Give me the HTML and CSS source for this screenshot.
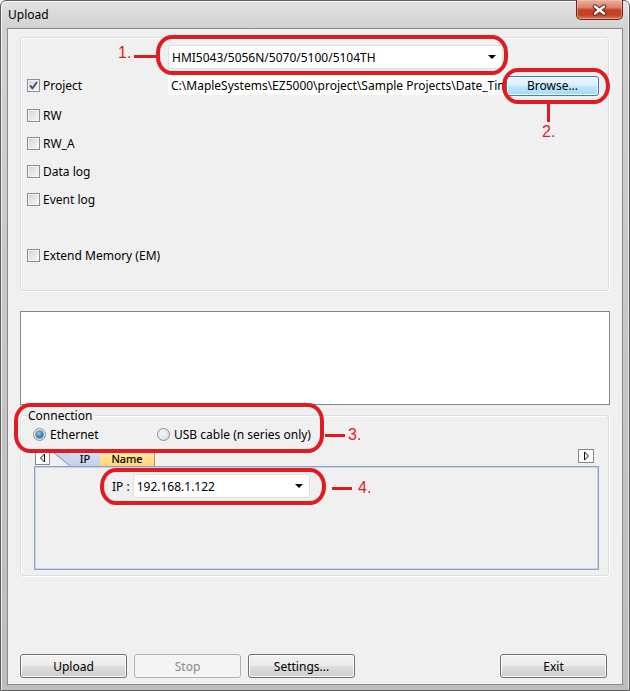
FILE: index.html
```html
<!DOCTYPE html>
<html lang="en">
<head>
<meta charset="utf-8">
<title>Upload</title>
<link rel="stylesheet" href="styles.css">
</head>
<body>
<div class="window">
  <div class="titlebar">
    <span class="title">Upload</span>
    <div class="close">
      <svg width="15" height="12" viewBox="0 0 15 12"><path d="M3 2.5 L12 9.5 M12 2.5 L3 9.5" stroke="#5a2418" stroke-width="4.4" stroke-linecap="round"/><path d="M3 2.5 L12 9.5 M12 2.5 L3 9.5" stroke="#ffffff" stroke-width="2.4" stroke-linecap="round"/></svg>
    </div>
  </div>
  <div class="client">
    <div class="group group-top">
      <div class="row-combo">
        <div class="combo combo-model"><span class="combo-text">HMI5043/5056N/5070/5100/5104TH</span><span class="drop"></span></div>
      </div>
      <div class="row-project">
        <div class="chk-item chk-first"><span class="chk"><svg width="11" height="11" viewBox="0 0 11 11"><path d="M2 5.5 L4.5 8.3 L9 2" fill="none" stroke="#3d4f8c" stroke-width="1.9"/></svg></span><span>Project</span></div>
        <div class="path">C:\MapleSystems\EZ5000\project\Sample Projects\Date_Time</div>
        <button class="btn btn-hot">Browse...</button>
      </div>
      <div class="chk-list">
        <div class="chk-item"><span class="chk"></span><span>RW</span></div>
        <div class="chk-item"><span class="chk"></span><span>RW_A</span></div>
        <div class="chk-item"><span class="chk"></span><span>Data log</span></div>
        <div class="chk-item"><span class="chk"></span><span>Event log</span></div>
        <div class="chk-spacer"></div>
        <div class="chk-item"><span class="chk"></span><span>Extend Memory (EM)</span></div>
      </div>
    </div>
    <div class="listbox"></div>
    <div class="group group-conn">
      <div class="legend">Connection</div>
      <div class="radios">
        <div class="radio-item radio-first"><span class="radio on"><span class="dot"></span></span><span>Ethernet</span></div>
        <div class="radio-item"><span class="radio"></span><span>USB cable (n series only)</span></div>
      </div>
      <div class="tabs">
        <div class="tabstrip">
          <div class="tab-arrow"><svg width="7" height="10" viewBox="0 0 7 10"><path d="M5.5 1 L1.5 5 L5.5 9 Z" fill="#fff" stroke="#000" stroke-width="1"/></svg></div>
          <div class="tab-ip"><span class="tab-slant"></span><span class="tab-body">IP</span></div>
          <div class="tab-name">Name</div>
          <div class="tab-arrow tab-arrow-right"><svg width="7" height="10" viewBox="0 0 7 10"><path d="M1.5 1 L5.5 5 L1.5 9 Z" fill="#fff" stroke="#000" stroke-width="1"/></svg></div>
        </div>
        <div class="tabpanel">
          <div class="ip-row">
            <span class="ip-label">IP :</span>
            <div class="combo combo-ip"><span class="combo-text">192.168.1.122</span><span class="drop"></span></div>
          </div>
        </div>
      </div>
    </div>
    <div class="buttons">
      <button class="btn">Upload</button>
      <button class="btn btn-disabled">Stop</button>
      <button class="btn">Settings...</button>
      <button class="btn btn-exit">Exit</button>
    </div>
  </div>
</div>

<div class="mark ring ring1"></div>
<div class="mark hline line1"></div>
<div class="mark num num1">1.</div>

<div class="mark ring ring2"></div>
<div class="mark vline line2"></div>
<div class="mark num num2">2.</div>

<div class="mark ring ring3"></div>
<div class="mark hline line3"></div>
<div class="mark num num3">3.</div>

<div class="mark ring ring4"></div>
<div class="mark hline line4"></div>
<div class="mark num num4">4.</div>
</body>
</html>
```

FILE: styles.css
```css
* { box-sizing: border-box; }
html, body { margin: 0; padding: 0; }
body {
  position: relative;
  width: 630px;
  height: 691px;
  overflow: hidden;
  font-family: "Noto Sans", "Liberation Sans", sans-serif;
  font-size: 12px;
  color: #000;
  background: #fff;
}

.window {
  width: 630px;
  height: 691px;
  display: flex;
  flex-direction: column;
  border: 1px solid #5e5e5e;
  border-radius: 6px 6px 0 0;
  background: linear-gradient(#e2e2e2 0, #d2d2d2 27px, #c8c8c8 40%, #bdbdbd 100%);
  box-shadow: inset 1px 1px 0 rgba(255,255,255,0.7), inset -1px 0 0 rgba(255,255,255,0.5);
}

.titlebar {
  height: 27px;
  display: flex;
  align-items: flex-start;
  flex-shrink: 0;
}
.title {
  margin: 6px 0 0 7px;
  line-height: 16px;
}
.close {
  margin: -1px 6px 0 auto;
  width: 47px;
  height: 20px;
  border: 1px solid #6a2618;
  border-top: none;
  border-radius: 0 0 5px 5px;
  background: linear-gradient(#eab0a2 0, #dc8068 40%, #c4401f 52%, #c24526 80%, #d87a5c 100%);
  box-shadow: inset 0 0 0 1px rgba(255,210,200,0.45);
  display: flex;
  align-items: center;
  justify-content: center;
}

.client {
  flex: 1;
  margin: 0 6px 5px 6px;
  border: 1px solid #8a8a8a;
  background: #f0f0f0;
  display: flex;
  flex-direction: column;
}

.group {
  border: 1px solid #d5dfe5;
  border-radius: 3px;
  box-shadow: inset 1px 1px 0 #fff, 1px 1px 0 #fff;
}
.group-top {
  margin: 8px 0 0 12px;
  width: 589px;
  height: 254px;
  padding: 7px 0 0 6px;
  flex-shrink: 0;
}

.row-combo { padding-left: 141px; height: 24px; }
.combo {
  display: flex;
  align-items: center;
  height: 24px;
  background: #fff;
  border: 1px solid #dedede;
  border-radius: 2px;
  padding-left: 3px;
}
.combo-model { width: 335px; }
.combo-text { flex: 1; white-space: nowrap; }
.drop {
  width: 0;
  height: 0;
  border-left: 4px solid transparent;
  border-right: 4px solid transparent;
  border-top: 4px solid #000;
  margin-right: 6px;
}

.row-project {
  display: flex;
  align-items: center;
  height: 21px;
  margin-top: 6px;
}
.chk-first { width: 141px; height: 21px; }
.path {
  width: 335px;
  height: 19px;
  background: #fff;
  padding-left: 3px;
  line-height: 19px;
  white-space: nowrap;
  overflow: hidden;
}

.chk-list { margin-top: 5px; }
.chk-item {
  display: flex;
  align-items: center;
  gap: 3px;
  height: 28px;
}
.chk-spacer { height: 28px; }
.chk {
  width: 13px;
  height: 13px;
  border: 1px solid #8e8f8f;
  background: linear-gradient(135deg, #cfd1d3 0, #e9eaeb 55%, #f8f8f8 100%);
  box-shadow: inset 0 0 0 1px #f4f4f4;
  display: inline-flex;
  align-items: center;
  justify-content: center;
  flex-shrink: 0;
}
.chk-first { display: flex; }

.listbox {
  margin: 20px 0 0 12px;
  width: 590px;
  height: 94px;
  background: #fff;
  border: 1px solid #828790;
  flex-shrink: 0;
}

.group-conn {
  margin: 10px 0 0 12px;
  width: 589px;
  height: 161px;
  flex-shrink: 0;
}
.legend {
  width: max-content;
  margin: -8px 0 0 5px;
  padding: 0 2px;
  background: #f0f0f0;
  line-height: 15px;
}

.radios {
  display: flex;
  align-items: center;
  height: 16px;
  margin: 3px 0 0 12px;
}
.radio-item { display: flex; align-items: center; gap: 4px; }
.radio-first { width: 124px; }
.radio {
  width: 13px;
  height: 13px;
  border-radius: 50%;
  border: 1px solid #8e8f8f;
  background: radial-gradient(circle at 35% 35%, #f6f6f6 0, #e4e4e4 60%, #cfcfcf 100%);
  display: inline-flex;
  align-items: center;
  justify-content: center;
  flex-shrink: 0;
}
.dot {
  width: 7px;
  height: 7px;
  border-radius: 50%;
  background: radial-gradient(circle at 40% 35%, #8fd2f6 0, #2f86c8 55%, #174c86 100%);
  box-shadow: 0 0 0 0.5px #1c3f6a;
}

.tabs {
  margin: 7px 0 0 13px;
  width: 565px;
}
.tabstrip {
  display: flex;
  align-items: flex-end;
  height: 17px;
  padding-left: 1px;
}
.tab-arrow {
  width: 15px;
  height: 14px;
  margin-bottom: 1px;
  background: #fff;
  border: 1px solid #8a8a8a;
  display: flex;
  align-items: center;
  justify-content: center;
}
.tab-arrow-right {
  width: 16px;
  margin: 0 5px 0 auto;
  align-self: flex-start;
}
.tab-ip {
  display: flex;
  height: 14px;
  margin-left: 3px;
  font-size: 11px;
}
.tab-slant {
  width: 17px;
  height: 14px;
  background: linear-gradient(to top right, transparent calc(50% - 0.8px), #7d8db0 50%, #c9d5f0 calc(50% + 0.8px));
}
.tab-body {
  width: 30px;
  background: linear-gradient(#d6e0f5, #c3d0ee);
  text-align: center;
  line-height: 14px;
  -webkit-text-stroke: 0.2px #000;
}
.tab-name {
  width: 55px;
  height: 14px;
  font-size: 11px;
  background: linear-gradient(#ffe7a6, #ffd37a);
  border-right: 1px solid #b99a5e;
  text-align: center;
  line-height: 14px;
  -webkit-text-stroke: 0.2px #000;
}
.tabpanel {
  height: 104px;
  border: 1px solid #8fa0c6;
  box-shadow: inset 0 0 0 1px #c8d3ea;
  background: #f0f0f0;
  padding: 7px 0 0 77px;
}
.ip-row {
  display: flex;
  align-items: center;
  gap: 3px;
  height: 24px;
}
.combo-ip { width: 177px; }

.buttons {
  display: flex;
  gap: 7px;
  margin: 78px 0 0 12px;
  height: 24px;
}
.btn {
  width: 107px;
  height: 24px;
  font: inherit;
  color: #000;
  padding: 0;
  border: 1px solid #707070;
  border-radius: 3px;
  background: linear-gradient(#f2f2f2 0, #ebebeb 48%, #dddddd 52%, #cfcfcf 100%);
  box-shadow: inset 0 0 0 1px #fbfbfb;
}
.btn-disabled {
  color: #8a8a8a;
  border-color: #adb2b5;
  background: #f4f4f4;
  box-shadow: none;
}
.btn-exit { margin: 0 15px 0 auto; }
.btn-hot {
  width: 93px;
  height: 20px;
  margin-left: 3px;
  border-color: #3c7fb1;
  background: linear-gradient(#eaf6fd 0, #d9f0fc 48%, #bee6fd 52%, #a7d9f5 100%);
  box-shadow: inset 0 0 0 1px #f0f9fe;
}

/* red annotations drawn over the screenshot */
.mark { position: absolute; }
.ring {
  border: 4px solid #e11b22;
  border-radius: 16px / 18px;
}
.ring1 { left: 156px; top: 35px; width: 352px; height: 40px; }
.ring2 { left: 502px; top: 68px; width: 108px; height: 36px; }
.ring3 { left: 14px; top: 403px; width: 310px; height: 50px; }
.ring4 { left: 100px; top: 468px; width: 226px; height: 37px; }
.hline { height: 3px; background: #e11b22; }
.vline { width: 3px; background: #e11b22; }
.line1 { left: 134px; top: 55px; width: 22px; }
.line2 { left: 547px; top: 104px; height: 18px; }
.line3 { left: 325px; top: 434px; width: 20px; }
.line4 { left: 332px; top: 487px; width: 20px; }
.num {
  font-family: "Liberation Sans", Arial, sans-serif;
  font-size: 16px;
  line-height: 16px;
  color: #e11b22;
}
.num1 { left: 118px; top: 45px; }
.num2 { left: 542px; top: 124px; }
.num3 { left: 348px; top: 427px; }
.num4 { left: 358px; top: 480px; }
```
